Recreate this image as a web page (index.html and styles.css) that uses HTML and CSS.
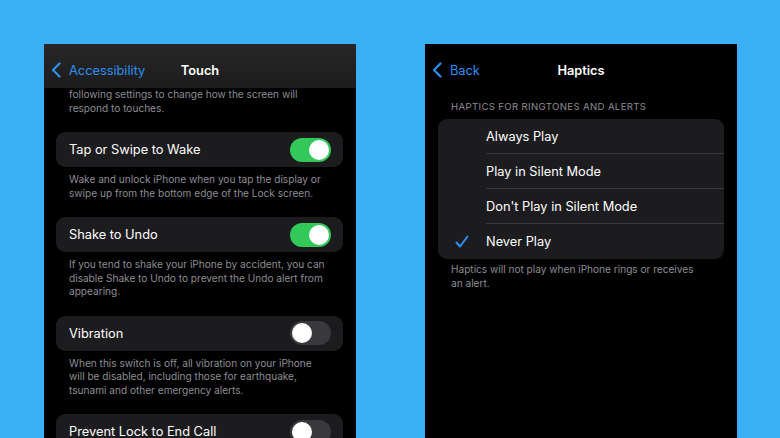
FILE: index.html
```html
<!DOCTYPE html>
<html lang="en">
    <head>
        <meta charset="UTF-8" />
        <title>Touch and Haptics</title>
        <link rel="stylesheet" href="styles.css">
    </head>

    <body>
        <div class="stage">
            <!-- Accessibility > Touch -->
            <section class="phone">
                <header class="navbar navbar-tinted">
                    <a class="back" href="#">
                        <svg class="chevron" viewBox="0 0 10 16"><polyline points="8.5,1.5 2,8 8.5,14.5" /></svg>
                        Accessibility
                    </a>
                    <h1>Touch</h1>
                    <span></span>
                </header>

                <div class="screen">
                    <p class="note intro">
                        following settings to change how the screen will<br />
                        respond to touches.
                    </p>

                    <div class="group">
                        <div class="cell">
                            <span>Tap or Swipe to Wake</span>
                            <span class="switch on"></span>
                        </div>
                        <p class="note">
                            Wake and unlock iPhone when you tap the display or<br />
                            swipe up from the bottom edge of the Lock screen.
                        </p>
                    </div>

                    <div class="group">
                        <div class="cell">
                            <span>Shake to Undo</span>
                            <span class="switch on"></span>
                        </div>
                        <p class="note">
                            If you tend to shake your iPhone by accident, you can<br />
                            disable Shake to Undo to prevent the Undo alert from<br />
                            appearing.
                        </p>
                    </div>

                    <div class="group">
                        <div class="cell">
                            <span>Vibration</span>
                            <span class="switch"></span>
                        </div>
                        <p class="note">
                            When this switch is off, all vibration on your iPhone<br />
                            will be disabled, including those for earthquake,<br />
                            tsunami and other emergency alerts.
                        </p>
                    </div>

                    <div class="group">
                        <div class="cell">
                            <span>Prevent Lock to End Call</span>
                            <span class="switch"></span>
                        </div>
                    </div>
                </div>
            </section>

            <!-- Sounds & Haptics > Haptics -->
            <section class="phone">
                <header class="navbar">
                    <a class="back" href="#">
                        <svg class="chevron" viewBox="0 0 10 16"><polyline points="8.5,1.5 2,8 8.5,14.5" /></svg>
                        Back
                    </a>
                    <h1>Haptics</h1>
                    <span></span>
                </header>

                <div class="screen">
                    <h2 class="section-title">Haptics for Ringtones and Alerts</h2>
                    <ul class="list">
                        <li class="option"><span class="mark"></span><span class="label">Always Play</span></li>
                        <li class="option"><span class="mark"></span><span class="label">Play in Silent Mode</span></li>
                        <li class="option"><span class="mark"></span><span class="label">Don't Play in Silent Mode</span></li>
                        <li class="option">
                            <span class="mark">
                                <svg class="check" viewBox="0 0 14 14"><polyline points="1.5,7.5 5,11.5 12.5,1.5" /></svg>
                            </span>
                            <span class="label">Never Play</span>
                        </li>
                    </ul>
                    <p class="note list-note">
                        Haptics will not play when iPhone rings or receives<br />
                        an alert.
                    </p>
                </div>
            </section>
        </div>
    </body>
</html>
```

FILE: styles.css
```css
html,
body {
    margin: 0;
    height: 100%;
    overflow: hidden;
}

body {
    background-color: #3cb0f6;
    font-family: "Inter", "Liberation Sans", sans-serif;
    color: #fff;
}

.stage {
    display: flex;
    gap: 69px;
    padding: 44px 0 0 44px;
    height: 100%;
    box-sizing: border-box;
}

.phone {
    width: 312px;
    background-color: #000;
    overflow: hidden;
}

/* navigation bar */
.navbar {
    display: grid;
    grid-template-columns: 1fr auto 1fr;
    align-items: center;
    height: 44px;
    padding: 8px 7px 0;
    box-sizing: border-box;
    background-color: #000;
    position: relative;
    z-index: 1;
}

.navbar-tinted {
    background: linear-gradient(#272727, #1c1c1c);
}

.navbar h1 {
    margin: 0;
    font-size: 12.8px;
    font-weight: 600;
}

.back {
    display: flex;
    align-items: center;
    gap: 8px;
    color: #2d8ff2;
    font-size: 12.8px;
    text-decoration: none;
}

.chevron {
    width: 10px;
    height: 16px;
}

.chevron polyline {
    fill: none;
    stroke: #2d8ff2;
    stroke-width: 2.2;
    stroke-linecap: round;
    stroke-linejoin: round;
}

.screen {
    padding: 0 13px 0 12px;
}

/* footer text under cells */
.note {
    margin: 0;
    padding: 6px 13px 0;
    font-size: 10.1px;
    line-height: 13.5px;
    white-space: nowrap;
    color: #8d8d93;
}

.intro {
    padding-top: 0;
    margin-bottom: 17px;
}

.group {
    margin-bottom: 17px;
}

.cell {
    display: flex;
    justify-content: space-between;
    align-items: center;
    height: 35px;
    padding: 0 12px 0 13px;
    background-color: #1c1c1e;
    border-radius: 9px;
    font-size: 12.8px;
}

/* toggle switch */
.switch {
    position: relative;
    width: 41px;
    height: 24px;
    border-radius: 12px;
    background-color: #39393d;
}

.switch::after {
    content: "";
    position: absolute;
    top: 2px;
    left: 2px;
    width: 20px;
    height: 20px;
    border-radius: 50%;
    background-color: #fff;
}

.switch.on {
    background-color: #32c85a;
}

.switch.on::after {
    left: 19px;
}

/* haptics list */
.phone + .phone .screen {
    padding: 0 13px;
}

.section-title {
    margin: 13px 0 6px;
    padding: 0 13px;
    font-size: 9.6px;
    font-weight: 400;
    line-height: 12px;
    text-transform: uppercase;
    letter-spacing: 0.35px;
    color: #8d8d93;
}

.list {
    margin: 0;
    padding: 0;
    list-style: none;
    background-color: #1c1c1e;
    border-radius: 9px;
}

.option {
    display: flex;
    height: 35px;
    font-size: 12.8px;
}

.mark {
    display: flex;
    align-items: center;
    width: 48px;
    padding-left: 17px;
    box-sizing: border-box;
}

.check {
    width: 14px;
    height: 14px;
}

.check polyline {
    fill: none;
    stroke: #2d8ff2;
    stroke-width: 2;
    stroke-linecap: round;
    stroke-linejoin: round;
}

.label {
    flex: 1;
    display: flex;
    align-items: center;
    border-bottom: 1px solid #38383a;
}

.option:last-child .label {
    border-bottom: none;
}

.list-note {
    padding-top: 4px;
}
```
